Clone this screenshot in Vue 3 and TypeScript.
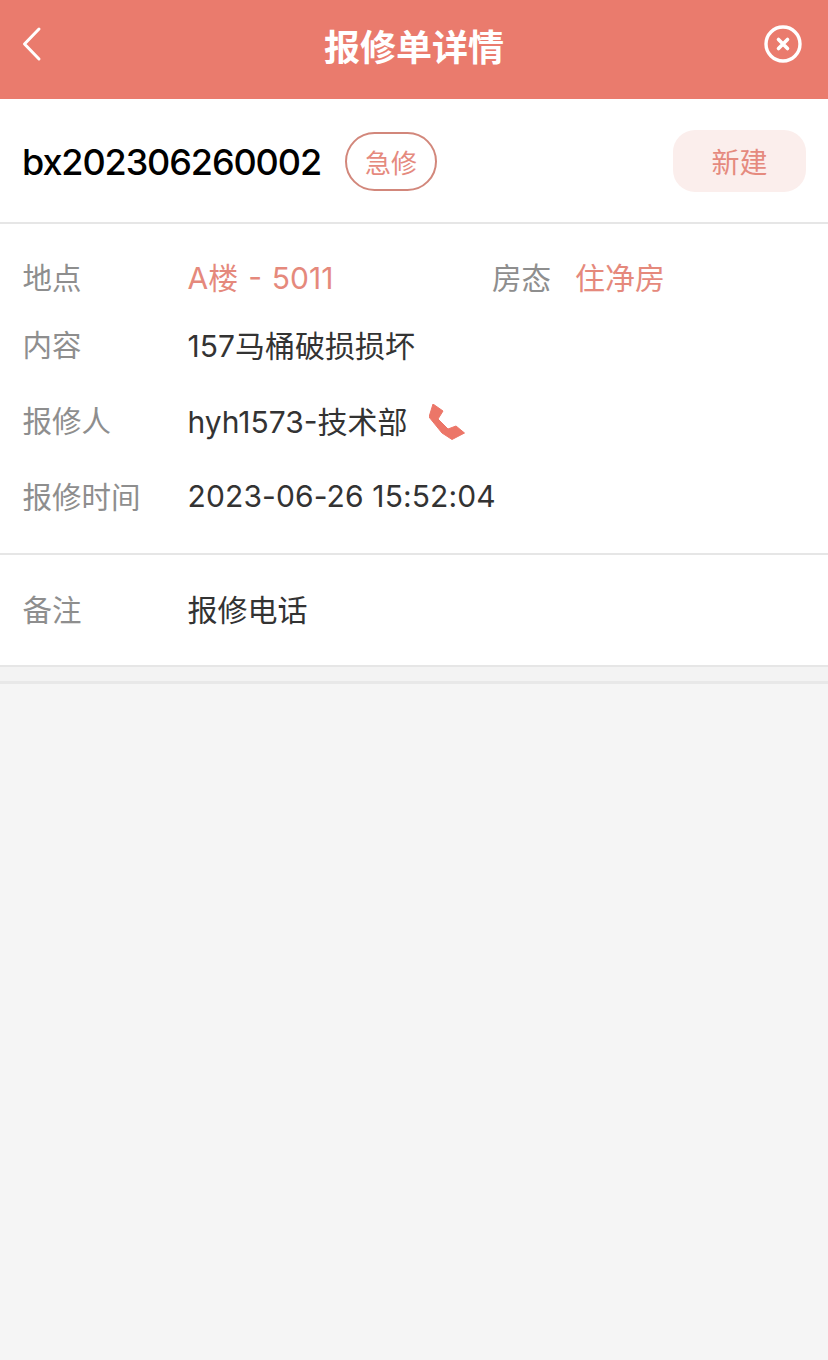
<template>
  <div class="page">
    <header class="nav">
      <svg class="back" width="24" height="36" viewBox="0 0 24 36">
        <path d="M19 3 L4.500 18 L19 33" fill="none" stroke="#fff" stroke-width="3" stroke-linecap="round" stroke-linejoin="round" />
      </svg>
      <h1 class="nav-title">报修单详情</h1>
      <svg class="close" width="40" height="40" viewBox="0 0 40 40">
        <circle cx="20" cy="20" r="17" fill="none" stroke="#fff" stroke-width="3.4" />
        <path d="M15.500 15.500 L24.500 24.500 M24.500 15.500 L15.500 24.500" stroke="#fff" stroke-width="3.6" stroke-linecap="round" />
      </svg>
    </header>

    <section class="head">
      <span class="order-no">{{ order.no }}</span>
      <span class="tag">{{ order.level }}</span>
      <span class="status">{{ order.status }}</span>
    </section>

    <section class="info">
      <div class="row first">
        <span class="label">地点</span>
        <span class="value accent place">A楼 - 5011</span>
        <span class="label room-label">房态</span>
        <span class="value accent">住净房</span>
      </div>
      <div class="row second">
        <span class="label">内容</span>
        <span class="value low">157马桶破损损坏</span>
      </div>
      <div class="row third">
        <span class="label">报修人</span>
        <span class="value low">hyh1573-技术部</span>
        <svg class="phone" width="36" height="36" viewBox="0 0 36 36">
          <path d="M4 0 L14 7 L9 15 L19 25 L27 22 L35.500 29 L23 35.500 L13 29 L0 13 Z" fill="#ec7668" stroke="#ec7668" stroke-linejoin="round" />
        </svg>
      </div>
      <div class="row fourth">
        <span class="label">报修时间</span>
        <span class="value low time">2023-06-26 15:52:04</span>
      </div>
    </section>

    <section class="remark">
      <span class="label">备注</span>
      <span class="value">报修电话</span>
    </section>

    <div class="strip"></div>
  </div>
</template>

<script setup lang="ts">
interface Order {
  no: string;
  level: string;
  status: string;
}

const order: Order = {
  no: "bx202306260002",
  level: "急修",
  status: "新建",
};
</script>

<style>
html,
body {
  background: #f5f5f5;
}
</style>

<style scoped>
.page {
  width: 828px;
  height: 1360px;
  background: #f5f5f5;
  font-family: Inter, "Noto Sans CJK SC", sans-serif;
  overflow: hidden;
}

.nav {
  height: 99px;
  background: #ea7b6d;
  display: flex;
  align-items: flex-start;
  justify-content: space-between;
  padding: 0 26px 0 20px;
  box-sizing: border-box;
}

.back {
  margin-top: 26px;
}

.nav-title {
  margin: 26px 0 0;
  font-size: 36px;
  line-height: 44px;
  font-weight: 700;
  color: #fff;
  position: absolute;
  left: 0;
  width: 828px;
  text-align: center;
}

.close {
  margin: 24px -1px 0 0;
}

.head {
  height: 125px;
  background: #fff;
  border-bottom: 2px solid #e6e6e6;
  box-sizing: border-box;
  display: flex;
  align-items: center;
  padding: 0 22px;
}

.order-no {
  margin-top: 2px;
  font-size: 36px;
  font-weight: 500;
  letter-spacing: -1.1px;
  color: #000;
}

.tag {
  margin: 2px 0 0 24px;
  width: 92px;
  height: 59px;
  box-sizing: border-box;
  border: 2px solid #d2877b;
  border-radius: 30px;
  color: #e58a7e;
  font-size: 26px;
  display: flex;
  align-items: center;
  justify-content: center;
}

.status {
  margin-left: auto;
  width: 133px;
  height: 62px;
  border-radius: 22px;
  background: #fbeeec;
  color: #e58a7e;
  font-size: 28px;
  display: flex;
  align-items: center;
  justify-content: center;
}

.info {
  height: 331px;
  background: #fff;
  border-bottom: 2px solid #e6e6e6;
  box-sizing: border-box;
  padding: 0 22.5px;
}

.row {
  display: flex;
  align-items: center;
  height: 44px;
}

.first {
  padding-top: 30px;
}

.second {
  padding-top: 23px;
}

.third {
  padding-top: 32px;
}

.fourth {
  padding-top: 32px;
}

.label {
  width: 165px;
  flex: none;
  color: #8e8e8e;
  font-size: 29.5px;
}

.value {
  color: #333;
  font-size: 30px;
}

.low {
  margin-top: 2px;
}

.time {
  letter-spacing: 0.12px;
}

.accent {
  color: #e5897c;
}

.place {
  width: 304.5px;
  flex: none;
  word-spacing: 1.5px;
}

.room-label {
  width: 83px;
}

.phone {
  margin: 6px 0 0 21px;
}

.remark {
  height: 112px;
  background: #fff;
  border-bottom: 2px solid #e6e6e6;
  box-sizing: border-box;
  display: flex;
  align-items: center;
  padding: 0 22.5px 5px;
}

.strip {
  height: 14px;
  background: #f3f3f3;
  border-bottom: 3px solid #e8e8e8;
}
</style>
